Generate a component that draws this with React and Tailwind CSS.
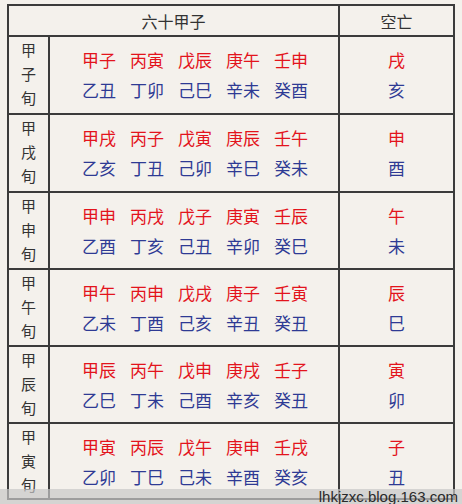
const rows = [
  { head: '子', yang: ['甲子', '丙寅', '戊辰', '庚午', '壬申'], yin: ['乙丑', '丁卯', '己巳', '辛未', '癸酉'], kong: ['戌', '亥'], h: 'h-[76px]' },
  { head: '戌', yang: ['甲戌', '丙子', '戊寅', '庚辰', '壬午'], yin: ['乙亥', '丁丑', '己卯', '辛巳', '癸未'], kong: ['申', '酉'], h: 'h-[76px]' },
  { head: '申', yang: ['甲申', '丙戌', '戊子', '庚寅', '壬辰'], yin: ['乙酉', '丁亥', '己丑', '辛卯', '癸巳'], kong: ['午', '未'], h: 'h-[75px]' },
  { head: '午', yang: ['甲午', '丙申', '戊戌', '庚子', '壬寅'], yin: ['乙未', '丁酉', '己亥', '辛丑', '癸丑'], kong: ['辰', '巳'], h: 'h-[75px]' },
  { head: '辰', yang: ['甲辰', '丙午', '戊申', '庚戌', '壬子'], yin: ['乙巳', '丁未', '己酉', '辛亥', '癸丑'], kong: ['寅', '卯'], h: 'h-[75px]' },
  { head: '寅', yang: ['甲寅', '丙辰', '戊午', '庚申', '壬戌'], yin: ['乙卯', '丁巳', '己未', '辛酉', '癸亥'], kong: ['子', '丑'], h: 'h-[74px]' },
];

export default function App() {
  return (
    <div className="relative min-h-screen w-full overflow-hidden bg-[#f4f1ec] pt-[4px] pl-[7px] font-['Noto_Sans_CJK_SC','Noto_Sans',sans-serif]">
      <div className="w-[448px] border-2 border-[#3b3b3b]">
        {/* header */}
        <div className="flex h-[31px] border-b-2 border-[#3b3b3b] text-[16px] text-[#333]">
          <div className="flex w-[331px] items-center justify-center border-r-2 border-[#3b3b3b]">六十甲子</div>
          <div className="flex flex-1 items-center justify-center">空亡</div>
        </div>
        {rows.map((r, i) => (
          <div key={r.head} className={`flex ${r.h} ${i > 0 ? 'border-t-2' : ''} box-content border-[#3b3b3b]`}>
            <div className="flex w-[41px] flex-col items-center border-r-2 border-[#3b3b3b] pt-[1px] text-[15px] leading-[24px] text-[#333]">
              <span>甲</span>
              <span>{r.head}</span>
              <span>旬</span>
            </div>
            <div className="w-[290px] border-r-2 border-[#3b3b3b] pt-[8px] pl-[32px] text-[17px] leading-[30px]">
              <div className="flex gap-[14px] text-[#e3141c]">
                {r.yang.map(s => <span key={s}>{s}</span>)}
              </div>
              <div className="flex gap-[14px] text-[#2e3a94]">
                {r.yin.map(s => <span key={s}>{s}</span>)}
              </div>
            </div>
            <div className="flex flex-1 flex-col items-center pt-[8px] text-[17px] leading-[30px]">
              <span className="text-[#e3141c]">{r.kong[0]}</span>
              <span className="text-[#2e3a94]">{r.kong[1]}</span>
            </div>
          </div>
        ))}
      </div>
      <div className="absolute bottom-0 left-0 flex h-[15px] w-full items-center justify-end bg-[#c8c8c8]/70 pr-[4px]">
        <span className="font-['Liberation_Sans',sans-serif] text-[15px] leading-[15px] text-[#2a2a2a]">lhkjzxc.blog.163.com</span>
      </div>
    </div>
  );
}
